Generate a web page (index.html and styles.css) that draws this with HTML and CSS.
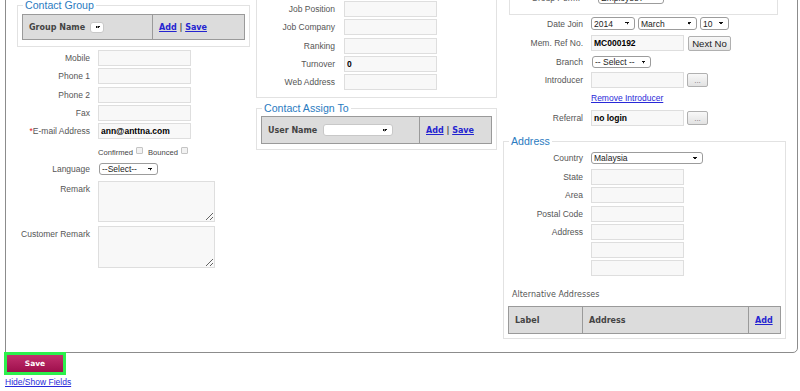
FILE: index.html
```html
<!DOCTYPE html>
<html>
<head>
<meta charset="utf-8">
<link rel="stylesheet" href="styles.css">
</head>
<body>
<div class="panel">
  <div class="col col-left">
    <fieldset class="box box-group">
      <legend>Contact Group</legend>
      <table class="bar">
        <tr>
          <td class="bar-main w-group"><b>Group Name</b> <select class="sel sel-tiny"><option></option></select></td>
          <td class="bar-act"><a href="#">Add</a> | <a href="#">Save</a></td>
        </tr>
      </table>
    </fieldset>
    <div class="rows rows-left">
      <div class="row"><label class="lbl">Mobile</label><input class="txt" type="text"></div>
      <div class="row"><label class="lbl">Phone 1</label><input class="txt" type="text"></div>
      <div class="row"><label class="lbl">Phone 2</label><input class="txt" type="text"></div>
      <div class="row"><label class="lbl">Fax</label><input class="txt" type="text"></div>
      <div class="row"><label class="lbl"><span class="req">*</span>E-mail Address</label><input class="txt val" type="text" value="ann@anttna.com"></div>
    </div>
    <div class="row row-check">
      <span class="lbl"></span>
      <span class="chk-text">Confirmed</span><span class="chk"></span>
      <span class="chk-text chk-gap">Bounced</span><span class="chk"></span>
    </div>
    <div class="row row-lang"><label class="lbl">Language</label><select class="sel sel-lang"><option>--Select--</option></select></div>
    <div class="row row-area row-remark"><label class="lbl lbl-top">Remark</label><textarea class="area"></textarea></div>
    <div class="row row-area row-cremark"><label class="lbl lbl-top">Customer Remark</label><textarea class="area area-2"></textarea></div>
  </div>

  <div class="col col-mid">
    <fieldset class="box box-job">
      <div class="rows">
        <div class="row"><label class="lbl">Job Position</label><input class="txt" type="text"></div>
        <div class="row"><label class="lbl">Job Company</label><input class="txt" type="text"></div>
        <div class="row"><label class="lbl">Ranking</label><input class="txt" type="text"></div>
        <div class="row"><label class="lbl">Turnover</label><input class="txt val" type="text" value="0"></div>
        <div class="row"><label class="lbl">Web Address</label><input class="txt" type="text"></div>
      </div>
    </fieldset>
    <fieldset class="box box-assign">
      <legend>Contact Assign To</legend>
      <table class="bar">
        <tr>
          <td class="bar-main w-user"><b>User Name</b> <select class="sel sel-user"><option></option></select></td>
          <td class="bar-act"><a href="#">Add</a> | <a href="#">Save</a></td>
        </tr>
      </table>
    </fieldset>
  </div>

  <div class="col col-right">
    <fieldset class="box box-perm">
      <div class="row row-perm"><label class="lbl">Group Perm.</label><select class="sel sel-perm"><option>Employee?</option></select></div>
    </fieldset>
    <div class="row row-date">
      <label class="lbl">Date Join</label>
      <select class="sel sel-year"><option>2014</option></select>
      <select class="sel sel-month"><option>March</option></select>
      <select class="sel sel-day"><option>10</option></select>
    </div>
    <div class="row row-ref"><label class="lbl">Mem. Ref No.</label><input class="txt val" type="text" value="MC000192"><button class="btn btn-next">Next No</button></div>
    <div class="row row-branch"><label class="lbl">Branch</label><select class="sel sel-branch"><option>-- Select --</option></select></div>
    <div class="row row-intro"><label class="lbl">Introducer</label><input class="txt" type="text"><button class="btn btn-dots">...</button></div>
    <div class="row row-remove"><span class="lbl"></span><a href="#" class="link">Remove Introducer</a></div>
    <div class="row row-referral"><label class="lbl">Referral</label><input class="txt val" type="text" value="no login"><button class="btn btn-dots">...</button></div>

    <fieldset class="box box-addr">
      <legend>Address</legend>
      <div class="row row-country"><label class="lbl">Country</label><select class="sel sel-country"><option>Malaysia</option></select></div>
      <div class="rows rows-addr">
        <div class="row"><label class="lbl">State</label><input class="txt" type="text"></div>
        <div class="row"><label class="lbl">Area</label><input class="txt" type="text"></div>
        <div class="row"><label class="lbl">Postal Code</label><input class="txt" type="text"></div>
        <div class="row"><label class="lbl">Address</label><input class="txt" type="text"></div>
        <div class="row"><span class="lbl"></span><input class="txt" type="text"></div>
        <div class="row"><span class="lbl"></span><input class="txt" type="text"></div>
      </div>
      <div class="alt-title">Alternative Addresses</div>
      <table class="bar bar-alt">
        <tr>
          <td class="alt-label"><b>Label</b></td>
          <td class="alt-addr"><b>Address</b></td>
          <td class="alt-add"><a href="#">Add</a></td>
        </tr>
      </table>
    </fieldset>
  </div>
</div>
<button class="save">Save</button>
<div class="footer"><a href="#" class="link">Hide/Show Fields</a></div>
</body>
</html>
```

FILE: styles.css
```css
body {
  margin: 0;
  background: #fff;
  font-family: "Liberation Sans", Arial, sans-serif;
  font-size: 8.5px;
  color: #555;
  overflow: hidden;
}

.panel {
  margin: -41px 0 0 5px;
  width: 793px;
  box-sizing: border-box;
  border: 1px solid #8c8c8c;
  border-radius: 0 0 5px 0;
  padding: 0 11px 13px 11px;
  display: flex;
  gap: 6px;
  align-items: flex-start;
}

.col { display: flex; flex-direction: column; }
.col-left { width: 233px; padding-top: 39px; }
.col-mid { width: 241px; padding-top: 30px; }
.col-right { width: 283px; padding-top: 26px; }

.box {
  margin: 0;
  border: 1px solid #e2e2e2;
  padding: 0 4px;
  min-width: 0;
}
.box legend {
  font-size: 10.6px;
  line-height: 12px;
  color: #2a7bbf;
  padding: 0 2px;
  margin-left: 1px;
}

.box-group { padding: 3px 4px 6px; }
.box-job { padding: 10px 4px 7px; }
.box-assign { margin-top: 4px; padding: 2px 4px 5px; }
.box-perm { margin: 0 8px 0 6px; padding: 5px 4px 10px; }
.box-addr { margin-top: 9px; padding: 5px 4px 4px; }

/* bars */
.bar {
  width: 100%;
  border-collapse: collapse;
  background: #dcdcdc;
  border: 1px solid #9a9a9a;
}
.bar td {
  border: 1px solid #9a9a9a;
  height: 24px;
  padding: 0 0 0 6px;
  font-family: "DejaVu Sans", Verdana, sans-serif;
  font-size: 8px;
  color: #444;
  white-space: nowrap;
}
.box-assign .bar td { height: 26px; }
.bar-alt td { height: 26px; }
.bar b { font-weight: bold; }
.w-group { width: 123px; }
.w-user { width: 151px; }
.bar-act { font-weight: bold; color: #333; }
.bar a {
  color: #2424d0;
  font-weight: bold;
  text-decoration: underline;
}
.alt-label { width: 67px; }
.alt-add { width: 25px; }

/* rows */
.rows { display: flex; flex-direction: column; gap: 2.25px; }
.rows-left { margin-top: 3px; }
.row {
  display: flex;
  align-items: center;
  min-height: 12px;
}
.lbl {
  flex: none;
  text-align: right;
  color: #555;
  white-space: nowrap;
}
.col-left .lbl { width: 73px; margin-right: 8px; }
.col-mid .lbl { width: 74px; margin-right: 9px; }
.col-right > .row > .lbl { width: 80px; margin-right: 8px; }
.box-addr .lbl { width: 75px; margin-right: 8px; }
.box-perm .lbl { width: 66px; margin-right: 18px; }
.req { color: #e02020; }

.txt {
  box-sizing: border-box;
  width: 93px;
  height: 16px;
  margin: 0;
  border: 1px solid #dedede;
  background: #f8f8f8;
  padding: 0 2px;
  font-family: "Liberation Sans", Arial, sans-serif;
  font-size: 8.5px;
  color: #000;
}
.txt.val { font-weight: bold; }

.sel {
  appearance: none;
  -webkit-appearance: none;
  box-sizing: border-box;
  height: 12px;
  margin: 0;
  border: 1px solid #9c9c9c;
  border-radius: 3px;
  padding: 0 10px 0 2px;
  font-family: "Liberation Sans", Arial, sans-serif;
  font-size: 8.5px;
  line-height: 10px;
  color: #222;
  background-color: #fff;
  background-image: linear-gradient(45deg, transparent 50%, #111 50%), linear-gradient(135deg, #111 50%, transparent 50%);
  background-position: calc(100% - 7px) 4px, calc(100% - 4.5px) 4px;
  background-size: 2.5px 2.5px, 2.5px 2.5px;
  background-repeat: no-repeat;
}
.sel-tiny {
  width: 14px;
  height: 11px;
  vertical-align: middle;
  margin-left: 2px;
  padding: 0;
  border-color: #c8c8c8;
  background-position: 4.5px 3.5px, 7px 3.5px;
}
.sel-user { width: 70px; vertical-align: middle; margin-left: 3px; border-color: #c8c8c8; }
.sel-lang { width: 59px; margin-left: 1px; }
.sel-year { width: 44px; height: 13px; }
.sel-month { width: 59px; height: 13px; margin-left: 3px; }
.sel-day { width: 29px; height: 13px; margin-left: 3px; }
.sel-branch { width: 59px; margin-left: 1px; }
.sel-country { width: 112px; }
.sel-perm { width: 66px; }

.row-check { margin-top: 7px; height: 14px; color: #444; font-size: 7.6px; }
.chk-text { line-height: 10px; }
.chk {
  width: 5px;
  height: 5px;
  border: 1px solid #c4c4c4;
  border-radius: 1px;
  background: #f2f2f2;
  margin-left: 3px;
  align-self: flex-start;
  margin-top: 1px;
}
.chk-gap { margin-left: 5px; }
.row-lang { margin-top: 1px; height: 16px; }
.row-area { align-items: flex-start; }
.row-remark { margin-top: 4px; }
.row-cremark { margin-top: 4px; }
.lbl-top { padding-top: 3px; }
.area {
  box-sizing: border-box;
  width: 117px;
  height: 41px;
  margin: 0;
  border: 1px solid #dedede;
  background: #f8f8f8;
}
.area-2 { height: 42px; }

/* right column */
.row-perm { height: 12px; }
.row-date { margin-top: 2px; height: 13px; }
.row-ref { margin-top: 5px; height: 16px; }
.row-branch { margin-top: 5px; height: 12px; }
.row-intro { margin-top: 4px; height: 16px; }
.row-remove { margin-top: 4px; height: 12px; }
.row-referral { margin-top: 6px; height: 16px; }

.btn {
  box-sizing: border-box;
  margin: 0 0 0 4px;
  border: 1px solid #b0b0b0;
  border-radius: 2px;
  background: linear-gradient(#f8f8f8, #e2e2e2);
  font-family: "Liberation Sans", Arial, sans-serif;
  color: #222;
  padding: 0;
}
.btn-next { width: 43px; height: 15px; font-size: 9.6px; }
.btn-dots { width: 21px; height: 14px; font-size: 8px; color: #777; margin-left: 3px; }

.link {
  color: #2828d8;
  text-decoration: underline;
  font-size: 8.5px;
}

.row-country { height: 12px; }
.rows-addr { margin-top: 5px; }
.alt-title {
  margin-top: 14px;
  height: 10px;
  line-height: 10px;
  padding-left: 4px;
  font-family: "DejaVu Sans", Verdana, sans-serif;
  font-size: 8px;
  color: #555;
}
.bar-alt { margin-top: 6px; }

/* bottom */
.save {
  display: block;
  margin: -1px 0 0 4px;
  width: 62px;
  height: 23px;
  box-sizing: border-box;
  border: 3px solid #2cf04c;
  background: linear-gradient(#c2306d, #9e0f4c);
  color: #fff;
  font-family: "DejaVu Sans", Verdana, sans-serif;
  font-weight: bold;
  font-size: 7.5px;
  padding: 0;
}
.footer {
  margin: 2px 0 0 5px;
  line-height: 10px;
}
```
